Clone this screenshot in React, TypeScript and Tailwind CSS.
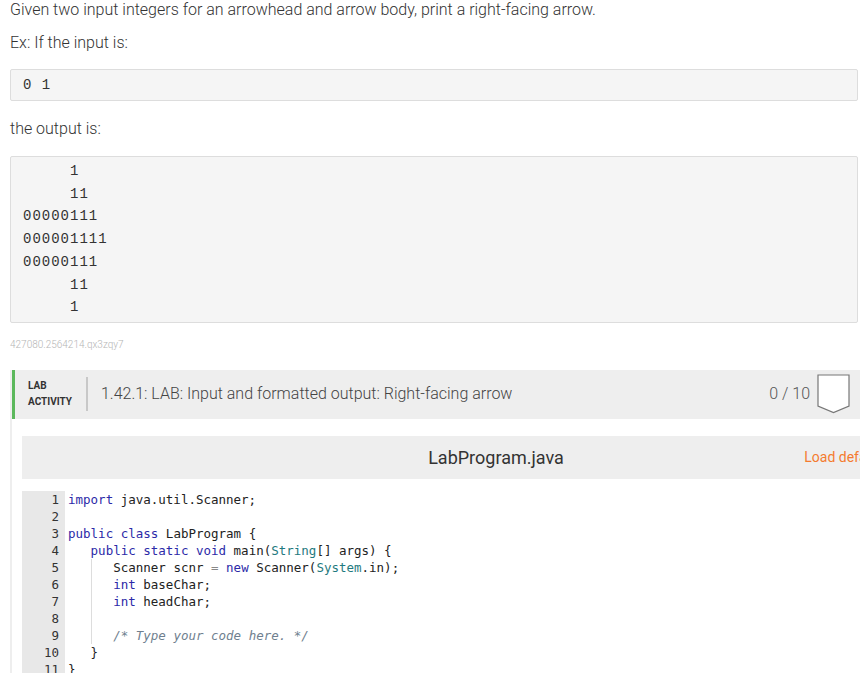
import React from 'react'

const mono = "font-['Liberation_Mono','DejaVu_Sans_Mono',monospace]"
const codeFont = "font-['DejaVu_Sans_Mono','Liberation_Mono',monospace]"

const arrowLines = ['     1', '     11', '00000111', '000001111', '00000111', '     11', '     1']

const kw = 'text-[#2c2aa8]'
const typ = 'text-[#1f7a80]'

const CodeLine: React.FC<{ n: number; children?: React.ReactNode }> = ({ n, children }) => (
  <div className="flex h-[17px] leading-[17px]">
    <div className="w-[43px] shrink-0 bg-[#e8e8e8] pr-[6px] text-right text-[#333]">{n}</div>
    <div className="whitespace-pre pl-[3px] text-[#222]">{children}</div>
  </div>
)

const Guide: React.FC = () => (
  <span className="inline-block h-[17px] w-[22.6px] border-l border-[#ddd] align-top" />
)

const ScoreBox: React.FC = () => (
  <svg width="33" height="40" viewBox="0 0 33 40" fill="none">
    <path d="M1 1 H32 V32 L16.5 38.5 L1 32 Z" stroke="#777" strokeWidth="1.2" fill="#fff" />
  </svg>
)

export default function App() {
  return (
    <div className="h-[673px] w-[868px] overflow-hidden bg-white font-['Roboto',sans-serif] font-light text-[#333]">
      <div className="px-[10px]">
        <p className="text-[16px] leading-[20px]">
          Given two input integers for an arrowhead and arrow body, print a right-facing arrow.
        </p>
        <p className="mt-[13px] text-[16px] leading-[20px]">Ex: If the input is:</p>

        <div className={`mt-[16px] rounded-[2px] border border-[#ddd] bg-[#f5f5f5] pl-[12px] text-[14px] leading-[30px] tracking-[1px] text-[#333] ${mono}`}>
          0 1
        </div>

        <p className="mt-[18px] text-[16px] leading-[20px]">the output is:</p>

        <div className={`mt-[17px] rounded-[2px] border border-[#ddd] bg-[#f5f5f5] py-[3px] pl-[12px] text-[14px] leading-[22.7px] tracking-[1px] text-[#333] ${mono}`}>
          {arrowLines.map((l, i) => (
            <div key={i} className="whitespace-pre">
              {l}
            </div>
          ))}
        </div>

        <p className="mt-[16px] text-[10px] leading-[12px] text-[#b5b5b5]">427080.2564214.qx3zqy7</p>
      </div>

      <div className="ml-[10px] mt-[19px] w-[850px] overflow-hidden border-l-2 border-[#eee]">
        <div className="flex h-[49px] items-center border-l-[3px] border-[#5cb85c] bg-[#eee] pr-[10px]">
          <div className="pl-[13px] text-[10px] font-bold leading-[16px] text-[#333]">
            <div>LAB</div>
            <div>ACTIVITY</div>
          </div>
          <div className="ml-[14px] h-[34px] w-[2px] bg-[#c8c8c8]" />
          <div className="ml-[13px] text-[16px] text-[#444]">
            1.42.1: LAB: Input and formatted output: Right-facing arrow
          </div>
          <div className="ml-auto flex items-center gap-[7px]">
            <span className="text-[16px] text-[#555]">0 / 10</span>
            <ScoreBox />
          </div>
        </div>

        <div className="pl-[10px] pt-[17px]">
          <div className="w-[948px]">
            <div className="grid h-[43px] grid-cols-[1fr_auto_1fr] items-center bg-[#eee]">
              <div />
              <div className="text-[18px] font-normal text-[#333]">LabProgram.java</div>
              <div className="justify-self-end pr-[18px] text-[14px] font-normal text-[#f47b2f]">
                Load default template...
              </div>
            </div>

            <div className={`bg-white pt-[12px] text-[12.5px] ${codeFont}`}>
              <CodeLine n={1}>
                <span className={kw}>import</span> java.util.Scanner;
              </CodeLine>
              <CodeLine n={2}> </CodeLine>
              <CodeLine n={3}>
                <span className={kw}>public</span> <span className={kw}>class</span> LabProgram {'{'}
              </CodeLine>
              <CodeLine n={4}>
                {'   '}
                <span className={kw}>public</span> <span className={kw}>static</span>{' '}
                <span className={kw}>void</span> main(<span className={typ}>String</span>[] args) {'{'}
              </CodeLine>
              <CodeLine n={5}>
                {'   '}
                <Guide />
                Scanner scnr <span className="text-[#888]">=</span> <span className={kw}>new</span> Scanner(
                <span className={typ}>System</span>.in);
              </CodeLine>
              <CodeLine n={6}>
                {'   '}
                <Guide />
                <span className={kw}>int</span> baseChar;
              </CodeLine>
              <CodeLine n={7}>
                {'   '}
                <Guide />
                <span className={kw}>int</span> headChar;
              </CodeLine>
              <CodeLine n={8}>
                {'   '}
                <Guide />
              </CodeLine>
              <CodeLine n={9}>
                {'   '}
                <Guide />
                <span className="italic text-[#6f7f8f]">/* Type your code here. */</span>
              </CodeLine>
              <CodeLine n={10}>{'   }'}</CodeLine>
              <CodeLine n={11}>{'}'}</CodeLine>
              <CodeLine n={12}> </CodeLine>
            </div>
          </div>
        </div>
      </div>
    </div>
  )
}
